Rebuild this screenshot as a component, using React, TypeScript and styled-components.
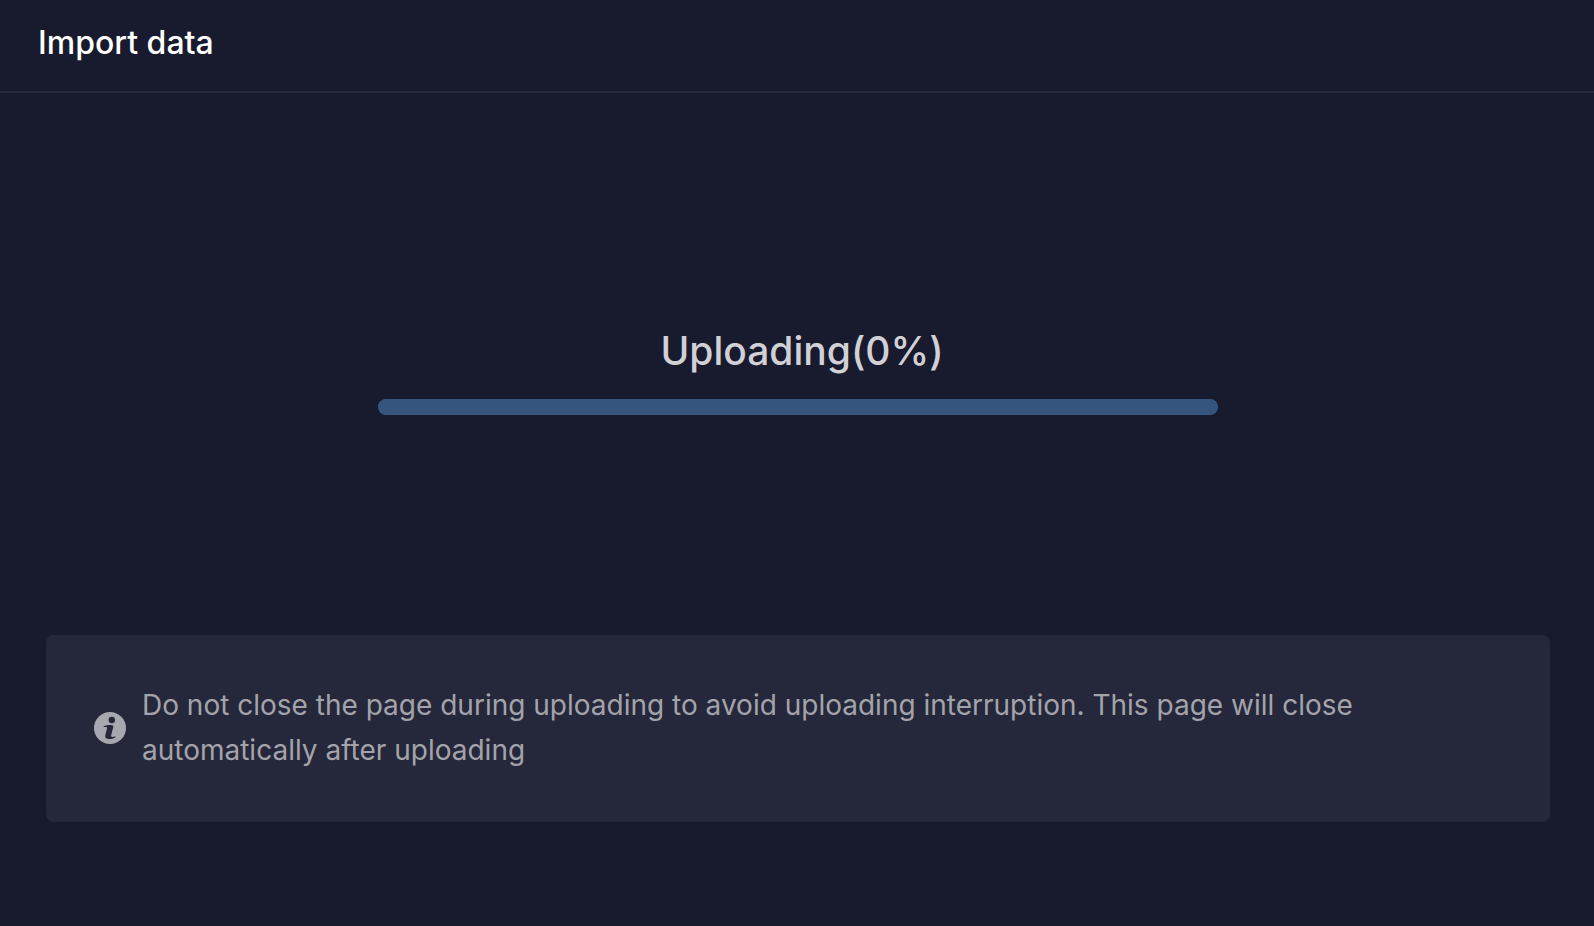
import React from "react";
import styled, { createGlobalStyle } from "styled-components";

const GlobalStyle = createGlobalStyle`
  body { margin: 0; background: #181a2e; font-family: Inter, sans-serif; }
`;
const Page = styled.div`
  min-height: 100vh;
  box-sizing: border-box;
  background: #181a2e;
`;
const Header = styled.header`
  padding: 23px 38px 28px;
  border-bottom: 2px solid #27293b;
`;
const Title = styled.h1`
  margin: 0;
  font-size: 32px;
  line-height: 40px;
  font-weight: 500;
  color: #ffffff;
`;
const Upload = styled.main`
  display: flex;
  flex-direction: column;
  align-items: center;
  padding: 232px 44px 220px 46px;
`;
const Status = styled.label`
  padding-left: 8px;
  font-size: 39px;
  line-height: 52px;
  font-weight: 500;
  color: #d1d1d5;
`;
const Progress = styled.progress`
  appearance: none;
  display: block;
  width: 56%;
  min-width: 280px;
  max-width: 840px;
  height: 16px;
  margin-top: 22px;
  border: 0;
  border-radius: 8px;
  overflow: hidden;
  background: #35547e;
  &::-webkit-progress-bar { background: #35547e; border-radius: 8px; }
  &::-webkit-progress-value { background: #4c9aff; }
`;
const Notice = styled.aside`
  display: flex;
  align-items: center;
  gap: 16px;
  margin: 0 44px 0 46px;
  padding: 48px 48px 49px;
  border-radius: 8px;
  background: #25273a;
`;
const InfoIcon = styled.svg`
  flex: none;
  width: 32px;
  height: 32px;
`;
const Message = styled.p`
  margin: 0;
  font-size: 28px;
  line-height: 45px;
  color: #a3a4ab;
`;

export default function App() {
  return (
    <Page>
      <GlobalStyle />
      <Header><Title>Import data</Title></Header>
      <Upload>
        <Status htmlFor="upload-progress">Uploading(0%)</Status>
        <Progress id="upload-progress" value={0} max={100} />
      </Upload>
      <Notice>
        <InfoIcon viewBox="0 0 32 32" aria-hidden="true">
          <circle cx="16" cy="16" r="16" fill="#a6a8af" />
          <circle cx="17.8" cy="8" r="3.2" fill="#25273a" />
          <path d="M9.7 14.2C11.5 13.3 14 13 17 13C19 13 19.6 13.8 19.2 15.4L17.2 23C16.9 24.3 17.2 25 18.4 25C19.4 25 20.2 24.7 21.4 24.2V25.2C19.8 26.5 17.5 27 15 27C12 27 10.6 25.6 11.3 23L13 16.6C13.3 15.5 12.9 15 11.8 15H9.7Z" fill="#25273a" />
        </InfoIcon>
        <Message>Do not close the page during uploading to avoid uploading interruption. This page will close automatically after uploading</Message>
      </Notice>
    </Page>
  );
}
